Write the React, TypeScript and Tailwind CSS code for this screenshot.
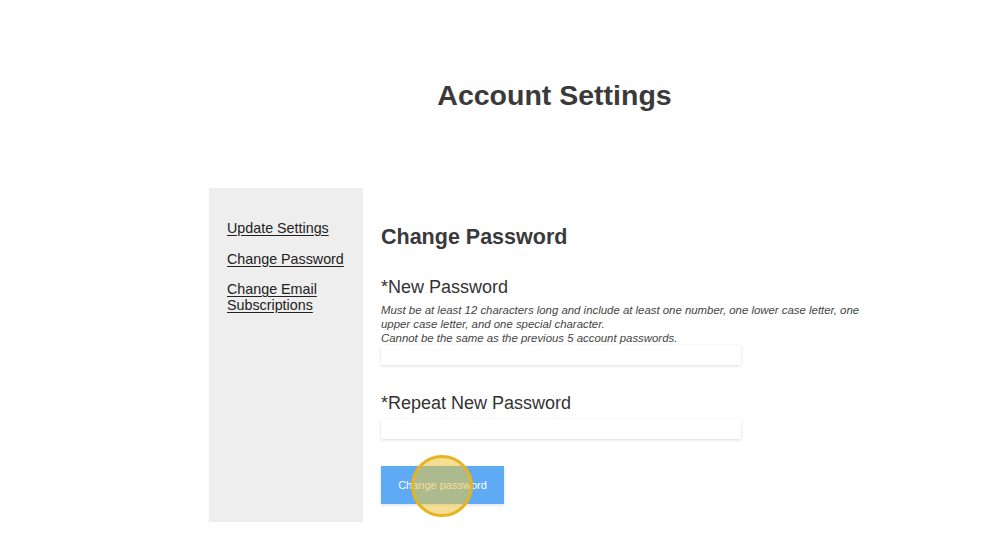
import React from 'react';

const links = ['Update Settings', 'Change Password', 'Change Email Subscriptions'];

const App: React.FC = () => {
  return (
    <div className="min-h-[558px] w-full bg-white text-[#333] font-['Liberation_Sans',Arial,sans-serif]">
      <div className="ml-[209px] w-[691px] pb-[36px]">
        <h1 className="pt-[78px] text-center text-[28.5px] font-bold leading-[34px] text-[#3a3a3a]">
          Account Settings
        </h1>

        <div className="mt-[76px] flex">
          {/* sidebar */}
          <nav className="w-[154px] shrink-0 bg-[#eeeeee] pl-[18px] pr-[14px] pt-[32px]">
            <ul className="flex flex-col gap-[14.5px]">
              {links.map((l) => (
                <li key={l} className="text-[14.3px] leading-[16px]">
                  <a href="#" className="text-[#222] underline underline-offset-[2px]">
                    {l}
                  </a>
                </li>
              ))}
            </ul>
          </nav>

          {/* main */}
          <div className="flex-1 pl-[18px] pr-[18px] pt-[36px] pb-[18px]">
            <h2 className="text-[21.5px] font-bold leading-[26px] text-[#3a3a3a]">Change Password</h2>

            <label className="mt-[26px] block text-[18px] leading-[22px] text-[#333]">*New Password</label>
            <p className="mt-[5px] w-[492px] text-[11.4px] italic leading-[14px] text-[#444]">
              Must be at least 12 characters long and include at least one number, one lower case letter, one upper
              case letter, and one special character.
              <br />
              Cannot be the same as the previous 5 account passwords.
            </p>
            <input
              type="password"
              className="block h-[20px] w-[360px] bg-white shadow-[0_1px_3px_rgba(0,0,0,0.14)] outline-none"
            />

            <label className="mt-[27px] block text-[18px] leading-[22px] text-[#333]">*Repeat New Password</label>
            <input
              type="password"
              className="mt-[5px] block h-[20px] w-[360px] bg-white shadow-[0_1px_3px_rgba(0,0,0,0.14)] outline-none"
            />

            <div className="relative mt-[27px] w-[123px]">
              <button className="flex h-[38px] w-[123px] items-center justify-center bg-[#5eaaf4] text-[11px] text-white shadow-[0_1px_3px_rgba(0,0,0,0.15)]">
                Change password
              </button>
              <div className="pointer-events-none absolute left-[30px] top-[-11px] h-[62px] w-[62px] rounded-full border-[3px] border-[#e6b422] bg-[rgba(238,196,60,0.55)]" />
            </div>
          </div>
        </div>
      </div>
    </div>
  );
};

export default App;
